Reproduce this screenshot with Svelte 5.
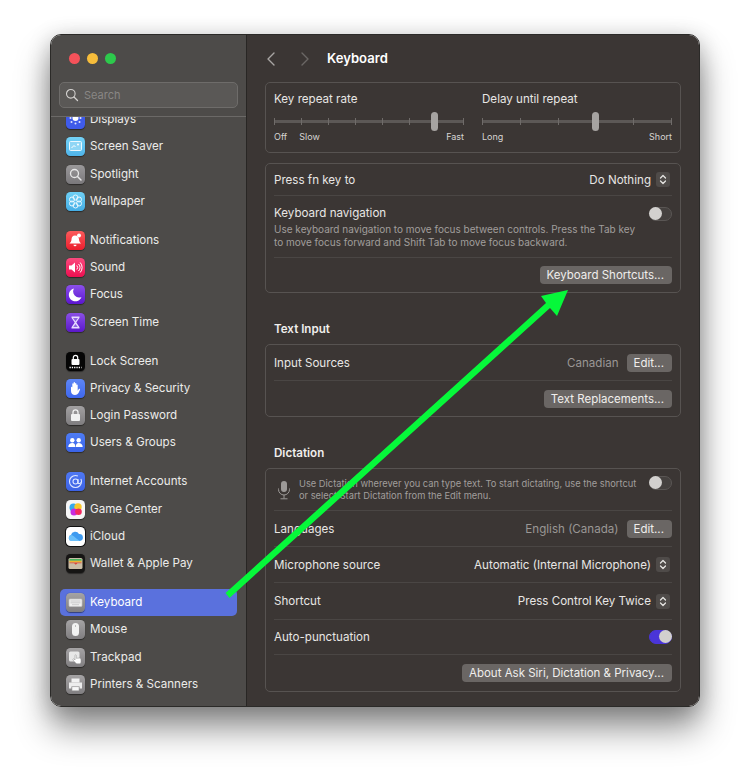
<script>
  const groups = [
    [
      { name: 'Displays', icon: 'displays' },
      { name: 'Screen Saver', icon: 'saver' },
      { name: 'Spotlight', icon: 'spotlight' },
      { name: 'Wallpaper', icon: 'wallpaper' }
    ],
    [
      { name: 'Notifications', icon: 'notifications' },
      { name: 'Sound', icon: 'sound' },
      { name: 'Focus', icon: 'focus' },
      { name: 'Screen Time', icon: 'time' }
    ],
    [
      { name: 'Lock Screen', icon: 'lock' },
      { name: 'Privacy & Security', icon: 'privacy' },
      { name: 'Login Password', icon: 'password' },
      { name: 'Users & Groups', icon: 'users' }
    ],
    [
      { name: 'Internet Accounts', icon: 'internet' },
      { name: 'Game Center', icon: 'game' },
      { name: 'iCloud', icon: 'icloud' },
      { name: 'Wallet & Apple Pay', icon: 'wallet' }
    ],
    [
      { name: 'Keyboard', icon: 'keyboard', active: true },
      { name: 'Mouse', icon: 'mouse' },
      { name: 'Trackpad', icon: 'trackpad' },
      { name: 'Printers & Scanners', icon: 'printers' }
    ]
  ];
  const repeatTicks = 8;
  const delayTicks = 6;
</script>

{#snippet glyph(icon)}
  <svg viewBox="0 0 19 19" width="19" height="19" aria-hidden="true">
    {#if icon === 'displays'}
      <circle cx="9.5" cy="8" r="3" fill="#fff" />
      <g fill="#dfe4ff">
        <circle cx="9.5" cy="13.5" r="1" /><circle cx="4.5" cy="8" r="1" /><circle cx="14.5" cy="8" r="1" />
        <circle cx="5.5" cy="12" r="1" /><circle cx="13.5" cy="12" r="1" />
      </g>
    {:else if icon === 'saver'}
      <rect x="3.5" y="4.5" width="12" height="9" rx="1" fill="#8fd6f5" stroke="#eaf8ff" />
      <path d="M5.5 11 8 8.5l1.5 1.5" fill="none" stroke="#fff" />
      <circle cx="12" cy="7.5" r="1" fill="#fff" />
    {:else if icon === 'spotlight'}
      <circle cx="8.5" cy="8.5" r="4" fill="none" stroke="#e8e8e8" stroke-width="1.3" />
      <path d="m11.5 11.5 3.5 3.5" stroke="#e8e8e8" stroke-width="1.5" stroke-linecap="round" />
    {:else if icon === 'wallpaper'}
      <g fill="none" stroke="#e9f8ff" stroke-width="1">
        <circle cx="9.5" cy="5.5" r="2.5" /><circle cx="9.5" cy="13.5" r="2.5" />
        <circle cx="6" cy="7.5" r="2.5" /><circle cx="13" cy="7.5" r="2.5" />
        <circle cx="6" cy="11.5" r="2.5" /><circle cx="13" cy="11.5" r="2.5" />
      </g>
    {:else if icon === 'notifications'}
      <path d="M9 4.5c-2.5 0-3.5 2-3.5 4 0 2-1.300 3-2 4h11.500c-.7-1-2-2-2-4 0-2-1.500-4-4-4z" fill="#fff" />
      <path d="M7.500 13.800h3a1.500 1.500 0 0 1-3 0z" fill="#fff" />
      <circle cx="13" cy="4.500" r="2" fill="#fff" />
    {:else if icon === 'sound'}
      <path d="M3 7.500h2.500L9 4.500v10L5.500 11.500H3z" fill="#fff" />
      <path d="M10.800 7.500a3 3 0 0 1 0 4M12.500 6a5.200 5.200 0 0 1 0 7M14.200 4.500a7.500 7.500 0 0 1 0 10" fill="none" stroke="#fff" stroke-width="1" />
    {:else if icon === 'focus'}
      <path d="M8 3.500a6.500 6.500 0 1 0 7.500 8.500 6 6 0 0 1-7.500-8.500z" fill="#fff" />
    {:else if icon === 'time'}
      <path d="M5.500 3.500h8v1.200L10.300 9.500l3.200 4.800v1.200h-8v-1.200l3.200-4.800-3.200-4.800z" fill="#e7dcff" />
      <path d="M7 5h5L9.500 8.500zM9.500 11 7.200 14h4.600z" fill="#6a2fd6" opacity=".7" />
    {:else if icon === 'lock'}
      <rect x="5.500" y="7" width="8" height="6" rx="1" fill="#fff" />
      <path d="M7.300 7V5.500a2.200 2.200 0 0 1 4.400 0V7" fill="none" stroke="#fff" stroke-width="1.200" />
      <path d="M3.500 15.500h12" stroke="#fff" stroke-width="1.300" stroke-dasharray="1.300 1" />
    {:else if icon === 'privacy'}
      <path d="M5 8.500c0-1 1.200-1 1.300 0V5c0-1 1.300-1 1.300 0V3.800c0-1 1.400-1 1.400 0V4.800c0-1 1.400-1 1.400 0v1.400c0-1 1.300-1 1.300 0v5.500l1-1.500c.7-.9 1.800-.2 1.200.8L12.500 14c-.8 1.300-2 2-3.500 2-2.300 0-4-1.600-4-4z" fill="#fff" />
    {:else if icon === 'password'}
      <rect x="5" y="8" width="9" height="7" rx="1" fill="#f1f1f1" />
      <path d="M7 8V6.300a2.500 2.500 0 0 1 5 0V8" fill="none" stroke="#f1f1f1" stroke-width="1.300" />
    {:else if icon === 'users'}
      <g fill="#fff">
        <circle cx="6.300" cy="7.300" r="2.200" /><circle cx="12.700" cy="7.300" r="2.200" />
        <path d="M2.300 14c0-2.600 1.800-4 4-4s3 1.400 3 4zM9.800 14c0-2.600.9-4 2.900-4s4 1.400 4 4z" />
      </g>
    {:else if icon === 'internet'}
      <circle cx="9.500" cy="9.500" r="6" fill="none" stroke="#dfe8ff" stroke-width="1.100" stroke-dasharray="30 4" />
      <circle cx="9.500" cy="9.500" r="2.500" fill="none" stroke="#dfe8ff" stroke-width="1.100" />
      <path d="M12 7v3.500c0 1.500 2 1.500 2.800 0" fill="none" stroke="#dfe8ff" stroke-width="1.100" />
    {:else if icon === 'game'}
      <circle cx="7.500" cy="7.500" r="4" fill="#35a8ee" />
      <circle cx="12" cy="7" r="3.700" fill="#f7c82b" />
      <circle cx="8" cy="12" r="3.500" fill="#c62be0" />
      <circle cx="12.500" cy="11.800" r="3.300" fill="#f32a5f" />
    {:else if icon === 'icloud'}
      <path d="M5.500 14a3 3 0 0 1-.5-5.900A4.300 4.300 0 0 1 13 7a3.500 3.500 0 0 1 .8 7z" fill="#3f9bf0" />
      <path d="M5.500 14a3 3 0 0 1-.5-5.900C7 8 9 11 13.800 14z" fill="#6cc0fa" />
    {:else if icon === 'wallet'}
      <rect x="2.500" y="4" width="14" height="11" rx="1.500" fill="#c9bda6" />
      <rect x="3.500" y="5" width="12" height="1.800" fill="#48b35c" />
      <rect x="3.500" y="6.800" width="12" height="1.600" fill="#efb52f" />
      <path d="M3.500 8.400h12v.8h-4l-1.700 1.500-1.700-1.500h-4.600z" fill="#d9473b" />
    {:else if icon === 'keyboard'}
      <rect x="3" y="6" width="13" height="7.500" rx="1" fill="#f0f0f0" stroke="#c4c4c4" stroke-width=".7" />
      <path d="M4.500 8h10M4.500 9.800h10M6 11.700h7" stroke="#c2c2c2" stroke-width=".8" />
    {:else if icon === 'mouse'}
      <rect x="6" y="3" width="7" height="13" rx="3.500" fill="#f2f2f2" />
      <rect x="9.200" y="5" width=".7" height="2" fill="#aaa" />
    {:else if icon === 'trackpad'}
      <rect x="3" y="3.500" width="10.500" height="10" rx="1.500" fill="#e8e8e8" />
      <path d="M9 7.500c0-1 1.300-1 1.300 0v2.800l3-.3c1.300.1 1.700.9 1.700 2v2c0 1-.8 1.800-1.800 1.800h-2c-.8 0-1.300-.3-1.800-1L7 12c-.5-1 .5-1.600 1.200-1L9 12z" fill="#fff" stroke="#8a8a8a" stroke-width=".5" />
    {:else if icon === 'printers'}
      <rect x="5.500" y="3.500" width="8" height="4" fill="#f2f2f2" />
      <path d="M3 7.500h13v6h-2.500v-2h-8v2H3z" fill="#ededed" />
      <rect x="6" y="11.800" width="7" height="4" fill="#f7f7f7" stroke="#9b9b9b" stroke-width=".5" />
    {/if}
  </svg>
{/snippet}

{#snippet chevrons()}
  <span class="stepper">
    <svg viewBox="0 0 14 15" width="14" height="15" aria-hidden="true">
      <path d="M4.500 6 7 3.500 9.500 6M4.500 9 7 11.500 9.500 9" fill="none" stroke="#e6e4e2" stroke-width="1.300" stroke-linecap="round" stroke-linejoin="round" />
    </svg>
  </span>
{/snippet}

<div class="window">
  <aside class="sidebar">
    <div class="lights">
      <span class="light red"></span>
      <span class="light yellow"></span>
      <span class="light green"></span>
    </div>
    <div class="search">
      <svg viewBox="0 0 14 14" width="14" height="14" aria-hidden="true">
        <circle cx="5.800" cy="5.800" r="4.300" fill="none" stroke="#d4d2d0" stroke-width="1.100" />
        <path d="m9 9 3.500 3.500" stroke="#d4d2d0" stroke-width="1.300" stroke-linecap="round" />
      </svg>
      <span class="search-text">Search</span>
    </div>
    <nav class="list">
      {#each groups as group}
        <ul class="group">
          {#each group as item}
            <li class="item" class:active={item.active}>
              <span class="icon {item.icon}">{@render glyph(item.icon)}</span>
              <span class="name">{item.name}</span>
            </li>
          {/each}
        </ul>
      {/each}
    </nav>
  </aside>

  <main class="main">
    <header class="head">
      <svg class="nav" viewBox="0 0 12 16" width="12" height="16" aria-hidden="true">
        <path d="M9 2 3 8l6 6" fill="none" stroke="#a8a5a3" stroke-width="1.400" stroke-linecap="round" stroke-linejoin="round" />
      </svg>
      <svg class="nav" viewBox="0 0 12 16" width="12" height="16" aria-hidden="true">
        <path d="m3 2 6 6-6 6" fill="none" stroke="#6b6765" stroke-width="1.400" stroke-linecap="round" stroke-linejoin="round" />
      </svg>
      <h1>Keyboard</h1>
    </header>

    <section class="card sliders">
      <div class="slider">
        <div class="label">Key repeat rate</div>
        <div class="track">
          {#each Array(repeatTicks) as _}<i></i>{/each}
          <b class="thumb repeat"></b>
        </div>
        <div class="scale"><span>Off</span><span class="slow">Slow</span><span class="end">Fast</span></div>
      </div>
      <div class="slider">
        <div class="label">Delay until repeat</div>
        <div class="track">
          {#each Array(delayTicks) as _}<i></i>{/each}
          <b class="thumb delay"></b>
        </div>
        <div class="scale"><span>Long</span><span class="end">Short</span></div>
      </div>
    </section>

    <section class="card">
      <div class="row h32">
        <span class="t">Press fn key to</span>
        <span class="right"><span class="t">Do Nothing</span>{@render chevrons()}</span>
      </div>
      <div class="row nav-row">
        <div>
          <div class="strong">Keyboard navigation</div>
          <p class="desc">Use keyboard navigation to move focus between controls. Press the Tab key<br />to move focus forward and Shift Tab to move focus backward.</p>
        </div>
        <span class="toggle"></span>
      </div>
      <div class="row last h34"><button>Keyboard Shortcuts...</button></div>
    </section>

    <h2>Text Input</h2>
    <section class="card">
      <div class="row h36">
        <span class="t">Input Sources</span>
        <span class="right"><span class="muted t">Canadian</span><button>Edit...</button></span>
      </div>
      <div class="row last h35"><button>Text Replacements...</button></div>
    </section>

    <h2>Dictation</h2>
    <section class="card">
      <div class="row dict-row">
        <svg class="mic" viewBox="0 0 14 20" width="14" height="20" aria-hidden="true">
          <rect x="4" y="1" width="6" height="11" rx="3" fill="#9c9997" />
          <path d="M1.500 8.500v1a5.500 5.500 0 0 0 11 0v-1M7 15v3.500M3.500 18.800h7" fill="none" stroke="#9c9997" stroke-width="1" />
        </svg>
        <p class="desc grow">Use Dictation wherever you can type text. To start dictating, use the shortcut<br />or select Start Dictation from the Edit menu.</p>
        <span class="toggle high"></span>
      </div>
      <div class="row h36">
        <span class="t">Languages</span>
        <span class="right"><span class="muted t">English (Canada)</span><button>Edit...</button></span>
      </div>
      <div class="row h36">
        <span class="t">Microphone source</span>
        <span class="right"><span class="t">Automatic (Internal Microphone)</span>{@render chevrons()}</span>
      </div>
      <div class="row h37">
        <span class="t">Shortcut</span>
        <span class="right"><span class="t">Press Control Key Twice</span>{@render chevrons()}</span>
      </div>
      <div class="row h35">
        <span class="t">Auto-punctuation</span>
        <span class="toggle on"></span>
      </div>
      <div class="row last h36"><button>About Ask Siri, Dictation &amp; Privacy...</button></div>
    </section>
  </main>
</div>

<svg class="arrow" viewBox="0 0 750 773" width="750" height="773" aria-hidden="true">
  <polygon points="225.500,593 229.500,598 550,308 557,316 568,290 541,296 546,303" fill="#06f83a" />
</svg>

<style>
  :global(body) {
    margin: 0;
    background: #fff;
    width: 750px;
    height: 773px;
    overflow: hidden;
    position: relative;
  }
  * { box-sizing: border-box; }

  .window {
    margin: 34px 0 0 50px;
    width: 650px;
    height: 673px;
    display: flex;
    border: 1px solid #2b2a28;
    border-radius: 11px;
    overflow: hidden;
    box-shadow: 0 22px 34px rgba(0, 0, 0, .42), 0 4px 22px rgba(0, 0, 0, .22);
    font: 11.600px/1.200 Inter, "Liberation Sans", sans-serif;
    color: #e8e6e4;
  }

  .sidebar {
    width: 196px;
    flex: none;
    background: #4d4b49;
    border-right: 1px solid #282624;
    display: flex;
    flex-direction: column;
    overflow: hidden;
  }
  .lights { display: flex; gap: 7px; padding: 18px 0 0 18px; height: 47px; }
  .light { width: 11px; height: 11px; border-radius: 50%; }
  .red { background: #f5525a; }
  .yellow { background: #f6bd3b; }
  .green { background: #2dc94c; }

  .search {
    margin: 0 8px 0 8px;
    height: 26px;
    flex: none;
    display: flex;
    align-items: center;
    gap: 5px;
    padding-left: 5px;
    background: #5a5856;
    border: 1px solid #6e6c6a;
    border-radius: 5px;
    color: #898785;
    font-size: 11px;
  }
  .search-text { padding-top: 1px; }

  .list {
    margin-top: 8px;
    height: 590px;
    flex: none;
    border-top: 1px solid #6b6967;
    overflow: hidden;
  }
  .group { list-style: none; margin: 0 0 11.750px; padding: 0 9px; }
  .group:first-child { margin-top: -11px; }
  .item {
    height: 27.250px;
    display: flex;
    align-items: center;
    gap: 5px;
    padding-left: 6px;
    border-radius: 5px;
    color: #ececea;
    white-space: nowrap;
  }
  .item.active { background: #5a71dd; color: #fff; }
  .name { padding-top: 1px; }

  .icon {
    width: 19px;
    height: 19px;
    flex: none;
    border-radius: 4.500px;
    display: block;
    box-shadow: 0 .5px 1px rgba(0, 0, 0, .45);
  }
  .icon svg { display: block; }
  .displays { background: #3f5bea; }
  .saver { background: linear-gradient(#74d2f7, #4fb4ea); }
  .spotlight { background: linear-gradient(#9a9899, #7a787b); }
  .wallpaper { background: linear-gradient(#6fd0f5, #44aee6); }
  .notifications { background: linear-gradient(#fb5b5b, #ec1e2e); }
  .sound { background: linear-gradient(#fb4a7e, #ee0f50); }
  .focus { background: linear-gradient(#8b50ea, #5c15d0); }
  .time { background: linear-gradient(#8a4fe6, #5b18c9); }
  .lock { background: #050505; }
  .privacy { background: linear-gradient(#5e86f5, #3f68ee); }
  .password { background: linear-gradient(#a2a0a1, #7f7d7f); }
  .users { background: linear-gradient(#4e7cf5, #3a63e8); }
  .internet { background: linear-gradient(#4f78f2, #3c62e4); }
  .game { background: #f6f6f6; }
  .icloud { background: #fff; box-shadow: 0 0 0 1px #111; }
  .wallet { background: #161514; }
  .keyboard, .mouse, .trackpad, .printers { background: linear-gradient(#a5a3a4, #807e80); }

  .main {
    flex: 1;
    min-width: 0;
    background: #3b3634;
    padding: 0 18px;
    overflow: hidden;
  }
  .head { height: 47px; display: flex; align-items: center; }
  .nav { flex: none; margin-right: 22px; }
  .nav + .nav { margin-right: 16px; }
  h1 { margin: 0; font-size: 13.100px; font-weight: 600; color: #fff; }
  h2 {
    margin: 28.500px 0 8.500px;
    padding-left: 9px;
    font-size: 11.600px;
    line-height: 14px;
    font-weight: 600;
    color: #f0eeec;
  }

  .card {
    border: 1px solid #575351;
    border-radius: 5px;
    padding: 0 8px;
  }
  .card + .card { margin-top: 10px; }

  .sliders { display: flex; gap: 18px; height: 71px; padding-top: 8px; }
  .slider { flex: 1; min-width: 0; }
  .label { height: 16px; line-height: 16px; }
  .track {
    position: relative;
    height: 7px;
    margin-top: 11px;
    display: flex;
    justify-content: space-between;
    align-items: center;
    background: linear-gradient(#5c5856, #5c5856) center / 100% 3px no-repeat;
  }
  .track i { width: 1px; height: 7px; background: #6f6b69; }
  .thumb {
    position: absolute;
    top: -6px;
    width: 7px;
    height: 19px;
    border-radius: 4px;
    background: #a6a3a1;
  }
  .thumb.repeat { left: 157px; }
  .thumb.delay { left: 110px; }
  .scale {
    display: flex;
    margin-top: 6px;
    font-size: 9px;
    line-height: 12px;
    color: #d6d4d2;
  }
  .slow { margin-left: 12px; }
  .end { margin-left: auto; }

  .row {
    display: flex;
    align-items: center;
    justify-content: space-between;
    border-bottom: 1px solid #4a4644;
  }
  .row.last { border-bottom: 0; justify-content: flex-end; }
  .h32 { height: 32px; }
  .h34 { height: 34px; }
  .h35 { height: 35px; }
  .h36 { height: 36px; }
  .h37 { height: 37px; }
  .t { padding-top: 2px; }
  .nav-row { height: 62px; align-items: flex-start; padding-top: 10px; }
  .dict-row { height: 42px; justify-content: flex-start; padding-left: 3px; }
  .strong { line-height: 15px; }
  .desc {
    margin: 2px 0 0;
    font-size: 10px;
    line-height: 13px;
    color: #a19e9c;
    white-space: nowrap;
  }
  .grow { flex: 1; min-width: 0; margin: 0 0 0 8px; line-height: 12px; font-size: 9.300px; }
  .mic { flex: none; }
  .right { display: flex; align-items: center; gap: 8px; }
  .muted { color: #9a9795; }
  .stepper {
    width: 14px;
    height: 15px;
    border-radius: 3px;
    background: #4f4b49;
    margin: 0 2px 0 -3px;
    display: block;
  }
  .stepper svg { display: block; }

  button {
    height: 18px;
    padding: 1px 8px 0 7px;
    border: 0;
    border-radius: 4px;
    background: #6a6664;
    color: #f0eeec;
    font: inherit;
    font-size: 11.500px;
    line-height: 17px;
    white-space: nowrap;
  }

  .toggle {
    position: relative;
    flex: none;
    width: 23px;
    height: 14px;
    margin-top: 1px;
    border-radius: 7px;
    background: #45413f;
    border: 1px solid #5a5654;
  }
  .toggle.high { margin: -14px 0 0; }
  .toggle::after {
    content: "";
    position: absolute;
    left: -1px;
    top: -1px;
    width: 13px;
    height: 13px;
    border-radius: 50%;
    background: #d2d0ce;
  }
  .toggle.on { background: #4a35d8; border-color: #4a35d8; margin-top: 0; }
  .toggle.on::after { left: auto; right: -1px; }

  .arrow { position: absolute; left: 0; top: 0; pointer-events: none; }
</style>
